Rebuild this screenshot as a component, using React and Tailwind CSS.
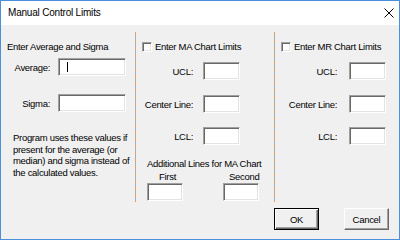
import React from 'react';

function Field({ className = '', caret = false }) {
  return (
    <div
      className={`relative h-[18px] bg-white border border-t-[#a0a0a0] border-l-[#a0a0a0] border-r-white border-b-white shadow-[inset_1px_1px_0_#696969,inset_-1px_-1px_0_#e3e3e3] ${className}`}
    >
      {caret && <span className="absolute left-[8px] top-[3px] w-px h-[10px] bg-black" />}
    </div>
  );
}

function Check() {
  return (
    <div className="w-[10px] h-[10px] shrink-0 bg-white border border-t-[#a0a0a0] border-l-[#a0a0a0] border-r-white border-b-white shadow-[inset_1px_1px_0_#696969,inset_-1px_-1px_0_#e3e3e3]" />
  );
}

function Sep() {
  return (
    <div className="w-px mt-[7px] h-[170px] shrink-0 bg-[repeating-linear-gradient(to_bottom,#d9a46c_0px,#d9a46c_5px,#86b4e4_5px,#86b4e4_7px)]" />
  );
}

export default function App() {
  return (
    <div className="w-[400px] h-[240px] border border-[#4a8fd9] bg-[#f0f0f0] flex flex-col overflow-hidden text-black font-['Liberation_Sans',Arial,sans-serif]">
      {/* title bar */}
      <div className="h-[24px] bg-white flex items-center justify-between pl-[7px] pr-[5px] shrink-0">
        <span className="text-[10px] leading-[14px] tracking-[-0.2px]">Manual Control Limits</span>
        <svg width="10" height="10" viewBox="0 0 10 10" className="block">
          <path d="M0.5 0.5L9.5 9.5M9.5 0.5L0.5 9.5" stroke="#000" strokeWidth="1" fill="none" />
        </svg>
      </div>

      {/* client area */}
      <div className="flex-1 flex flex-col text-[9.5px] leading-[13px] tracking-[-0.3px] whitespace-nowrap">
        <div className="flex h-[183px]">
          {/* left column */}
          <div className="w-[134px] pt-[15px] pl-[6px] shrink-0">
            <div>Enter Average and Sigma</div>
            <div className="flex items-center gap-[8px] mt-[5px]">
              <span className="w-[43px] text-right">Average:</span>
              <Field className="w-[68px]" caret />
            </div>
            <div className="flex items-center gap-[8px] mt-[18px]">
              <span className="w-[43px] text-right">Sigma:</span>
              <Field className="w-[68px]" />
            </div>
            <p className="mt-[20px] pl-[6px] leading-[11.5px]">
              Program uses these values if<br />
              present for the average (or<br />
              median) and sigma instead of<br />
              the calculated values.
            </p>
          </div>

          <Sep />

          {/* middle column */}
          <div className="w-[138px] pt-[15px] shrink-0">
            <div className="flex items-center gap-[3px] pl-[6px]">
              <Check />
              <span>Enter MA Chart Limits</span>
            </div>
            <div className="flex items-center gap-[10px] mt-[9px]">
              <span className="w-[57px] text-right">UCL:</span>
              <Field className="w-[37px]" />
            </div>
            <div className="flex items-center gap-[10px] mt-[15px]">
              <span className="w-[57px] text-right">Center Line:</span>
              <Field className="w-[37px]" />
            </div>
            <div className="flex items-center gap-[10px] mt-[14px]">
              <span className="w-[57px] text-right">LCL:</span>
              <Field className="w-[37px]" />
            </div>
            <div className="mt-[12px] pl-[11px]">Additional Lines for MA Chart</div>
            <div className="flex pl-[23px]">
              <span className="w-[70px]">First</span>
              <span>Second</span>
            </div>
            <div className="flex gap-[40px] pl-[11px]">
              <Field className="w-[36px]" />
              <Field className="w-[36px]" />
            </div>
          </div>

          <Sep />

          {/* right column */}
          <div className="flex-1 pt-[15px]">
            <div className="flex items-center gap-[3px] pl-[6px]">
              <Check />
              <span>Enter MR Chart Limits</span>
            </div>
            <div className="flex items-center gap-[12px] mt-[9px]">
              <span className="w-[62px] text-right">UCL:</span>
              <Field className="w-[37px]" />
            </div>
            <div className="flex items-center gap-[12px] mt-[15px]">
              <span className="w-[62px] text-right">Center Line:</span>
              <Field className="w-[37px]" />
            </div>
            <div className="flex items-center gap-[12px] mt-[14px]">
              <span className="w-[62px] text-right">LCL:</span>
              <Field className="w-[37px]" />
            </div>
          </div>
        </div>

        {/* buttons */}
        <div className="flex justify-end gap-[25px] pr-[10px]">
          <button className="w-[45px] h-[22px] bg-[#f0f0f0] border border-black shadow-[inset_1px_1px_0_#fff,inset_-1px_-1px_0_#696969,inset_-2px_-2px_0_#a0a0a0]">
            OK
          </button>
          <button className="w-[45px] h-[22px] bg-[#f0f0f0] border border-t-white border-l-white border-r-[#696969] border-b-[#696969] shadow-[inset_-1px_-1px_0_#a0a0a0]">
            Cancel
          </button>
        </div>
      </div>
    </div>
  );
}
